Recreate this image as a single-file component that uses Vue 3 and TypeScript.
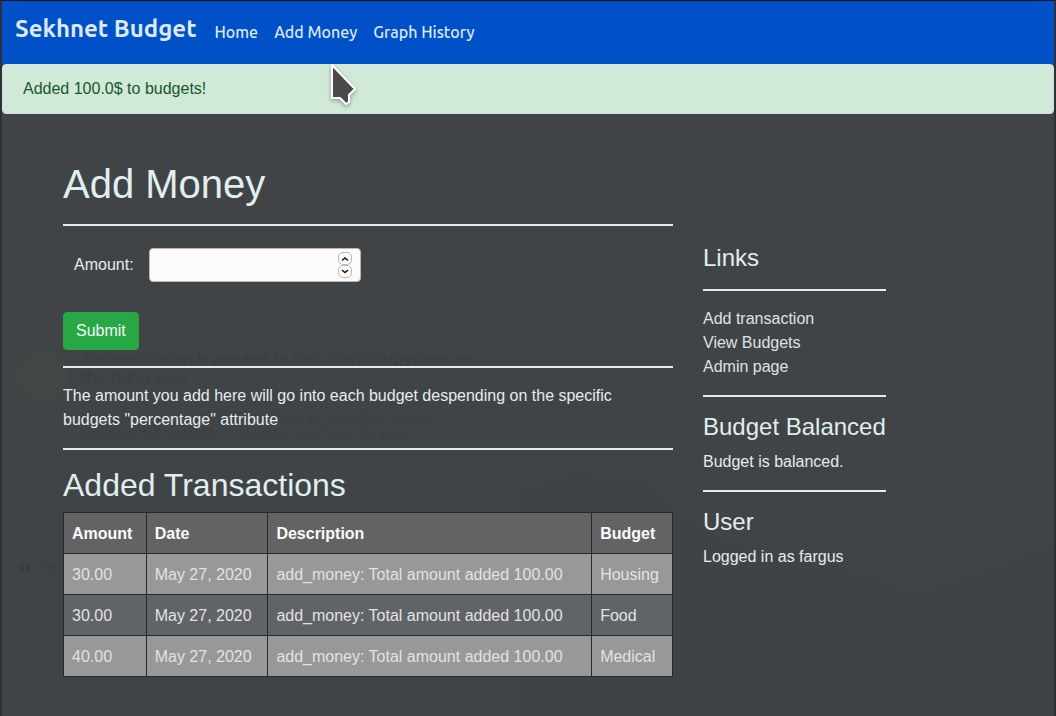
<script setup lang="ts">
import { ref } from 'vue'

interface Transaction {
  amount: string
  date: string
  description: string
  budget: string
}

const navLinks: string[] = ['Home', 'Add Money', 'Graph History']
const sideLinks: string[] = ['Add transaction', 'View Budgets', 'Admin page']
const transactions: Transaction[] = [
  { amount: '30.00', date: 'May 27, 2020', description: 'add_money: Total amount added 100.00', budget: 'Housing' },
  { amount: '30.00', date: 'May 27, 2020', description: 'add_money: Total amount added 100.00', budget: 'Food' },
  { amount: '40.00', date: 'May 27, 2020', description: 'add_money: Total amount added 100.00', budget: 'Medical' },
]

const amount = ref<number | ''>('')

function step(by: number): void {
  amount.value = Number(amount.value || 0) + by
}
</script>

<template>
  <div class="window">
    <svg class="scenery" viewBox="0 0 1052 715" preserveAspectRatio="none" aria-hidden="true">
      <path d="M514 715 V490 L570 470 L640 480 L700 530 L790 560 L830 564 L870 576 L912 592 L970 572 L1010 560 L1052 545 V715 Z" />
    </svg>
    <div class="ghost" aria-hidden="true">
      <svg class="ghost-lock" viewBox="0 0 54 54"><circle cx="27" cy="27" r="27" /></svg>
      <p class="ghost-title">Authentication is needed to run `/usr/bin/python' as the super user</p>
      <p class="ghost-note">An application is attempting to perform an action that requires privileges. Authentication is required to perform this action.</p>
    </div>
    <div class="ghost-details" aria-hidden="true">
      <svg viewBox="0 0 14 14">
        <circle cx="7" cy="7" r="7" />
        <path d="M7 3 V5 M7 6 V11" />
      </svg>
      Details
    </div>

    <nav class="navbar">
      <a class="brand" href="#">Sekhnet Budget</a>
      <a v-for="link in navLinks" :key="link" class="nav-link" href="#">{{ link }}</a>
    </nav>

    <div class="alert" role="alert">Added 100.0$ to budgets!</div>

    <div class="container">
      <main class="content">
        <h1>Add Money</h1>
        <hr />
        <form @submit.prevent>
          <div class="field">
            <label for="amount">Amount:</label>
            <div class="number">
              <input id="amount" v-model="amount" type="number" />
              <div class="spinner">
                <button type="button" aria-label="Increase" @click="step(1)">
                  <svg viewBox="0 0 8 6"><path d="M1 4.5 L4 2 L7 4.5" /></svg>
                </button>
                <button type="button" aria-label="Decrease" @click="step(-1)">
                  <svg viewBox="0 0 8 6"><path d="M1 1 L4 3.5 L7 1" /></svg>
                </button>
              </div>
            </div>
          </div>
          <button class="submit" type="submit">Submit</button>
        </form>
        <hr />
        <p>The amount you add here will go into each budget despending on the specific budgets "percentage" attribute</p>
        <hr />
        <h2>Added Transactions</h2>
        <table>
          <thead>
            <tr>
              <th scope="col">Amount</th>
              <th scope="col">Date</th>
              <th scope="col">Description</th>
              <th scope="col">Budget</th>
            </tr>
          </thead>
          <tbody>
            <tr v-for="(row, i) in transactions" :key="i">
              <td>{{ row.amount }}</td>
              <td>{{ row.date }}</td>
              <td>{{ row.description }}</td>
              <td>{{ row.budget }}</td>
            </tr>
          </tbody>
        </table>
      </main>

      <aside class="sidebar">
        <h4>Links</h4>
        <hr />
        <ul>
          <li v-for="link in sideLinks" :key="link"><a href="#">{{ link }}</a></li>
        </ul>
        <hr />
        <h4 class="tight">Budget Balanced</h4>
        <p>Budget is balanced.</p>
        <hr />
        <h4 class="tight">User</h4>
        <p>Logged in as fargus</p>
      </aside>
    </div>

    <svg class="pointer" viewBox="0 0 30 46" aria-hidden="true">
      <path d="M4 3 V36 H12 L18 42 L21 40 V33 L27 27 Z" />
    </svg>
  </div>
</template>

<style>
body {
  margin: 0;
  background: #414446;
}
</style>

<style scoped>
.window {
  position: relative;
  box-sizing: border-box;
  min-height: 100vh;
  border: 2px solid #2e2f3a;
  border-top: 1px solid #101214;
  border-bottom: 0;
  background: #414446;
  color: #e0eeee;
  font: 16px/24px "Liberation Sans", Arial, sans-serif;
  overflow: hidden;
}

.scenery {
  position: absolute;
  inset: 0;
  width: 100%;
  height: 100%;
  fill: #404345;
}

.ghost {
  position: absolute;
  top: 348px;
  left: 78px;
  width: 410px;
  color: #3d4042;
  font-family: "Noto Sans", sans-serif;
}

.ghost-lock {
  position: absolute;
  top: 0;
  left: -65px;
  width: 54px;
  height: 54px;
  fill: #414745;
}

.ghost p {
  margin: 0;
}

.ghost-title {
  font-size: 15px;
  font-weight: 700;
  line-height: 18px;
}

.ghost .ghost-note {
  margin-top: 24px;
  font-size: 12px;
  line-height: 16px;
}

.ghost-details {
  position: absolute;
  top: 554px;
  left: 16px;
  display: flex;
  align-items: center;
  gap: 6px;
  color: #3b3f42;
  font-family: "Noto Sans", sans-serif;
  font-size: 12px;
}

.ghost-details svg {
  width: 14px;
  height: 14px;
  fill: #3b3f42;
  stroke: #424548;
  stroke-width: 2;
}

.navbar {
  position: relative;
  display: flex;
  align-items: flex-start;
  gap: 16px;
  box-sizing: border-box;
  height: 63px;
  padding: 10px 13px;
  background: #0050c8;
  font-family: Ubuntu, "Noto Sans", sans-serif;
}

.navbar a {
  color: #dde8f0;
  text-decoration: none;
}

.navbar .brand {
  margin-right: 2px;
  font-size: 24px;
  font-weight: 600;
  line-height: 36px;
}

.nav-link {
  font-weight: 500;
  line-height: 42px;
}

.alert {
  position: relative;
  padding: 12px 20px;
  border: 1px solid #cbe6d2;
  border-radius: 4px;
  background: #d0e9d8;
  color: #195728;
}

.container {
  position: relative;
  display: grid;
  grid-template-columns: 2fr 1fr;
  box-sizing: border-box;
  max-width: 960px;
  margin: 46px auto 0;
  padding-bottom: 38px;
}

.content,
.sidebar {
  min-width: 0;
  padding: 0 15px;
}

.sidebar {
  justify-self: start;
  padding-top: 84px;
}

h1,
h2,
h4 {
  margin: 0;
  font-weight: 400;
}

h1 {
  font-size: 40px;
  line-height: 48px;
}

h2 {
  margin-bottom: 8px;
  font-size: 32px;
  line-height: 38px;
}

h4 {
  padding-bottom: 1px;
  font-size: 24px;
  line-height: 28px;
}

h4.tight {
  margin-bottom: 8px;
}

hr {
  height: 2px;
  margin: 16px 0;
  border: 0;
  background: #e0eeee;
}

p {
  margin: 0;
}

ul {
  margin: 0;
  padding: 0;
  list-style: none;
}

.sidebar a {
  color: #dee2e4;
  text-decoration: none;
}

.field {
  display: flex;
  align-items: center;
  gap: 15px;
  margin-bottom: 30px;
  padding: 6px 0 0 11px;
}

.number {
  position: relative;
}

input {
  display: block;
  box-sizing: border-box;
  width: 212px;
  height: 34px;
  padding: 4px 30px 4px 8px;
  border: 1px solid #bcb4b0;
  border-radius: 4px;
  background: #fbfbfb;
  color: #222;
  font: inherit;
  appearance: textfield;
}

input::-webkit-inner-spin-button {
  appearance: none;
  margin: 0;
}

.spinner {
  position: absolute;
  top: 4px;
  right: 9px;
  display: grid;
}

.spinner button {
  display: grid;
  place-items: center;
  box-sizing: border-box;
  width: 14px;
  height: 13px;
  padding: 0;
  border: 1px solid #c0b8b4;
  border-radius: 5px;
  background: #fbfbfb;
}

.spinner svg {
  width: 8px;
  height: 6px;
  fill: none;
  stroke: #141414;
  stroke-width: 1.5;
}

.submit {
  display: block;
  padding: 6px 12px;
  border: 1px solid #28a745;
  border-radius: 4px;
  background: #28a745;
  color: #f4faf6;
  font: inherit;
}

table {
  width: 100%;
  border-collapse: collapse;
}

th,
td {
  padding: 9px 8px 7px;
  border: 1px solid #28292a;
  text-align: left;
}

th {
  background: #636363;
  color: #fafafa;
}

td {
  color: #e2e2e2;
}

tbody tr {
  background: #989898;
}

tbody tr:nth-child(even) {
  background: #606468;
}

.pointer {
  position: absolute;
  top: 61px;
  left: 326px;
  width: 30px;
  height: 46px;
  fill: #4b4b4b;
  stroke: #fff;
  stroke-width: 2;
  stroke-linejoin: round;
  filter: drop-shadow(0 2px 2px rgba(0, 0, 0, 0.3));
}
</style>
